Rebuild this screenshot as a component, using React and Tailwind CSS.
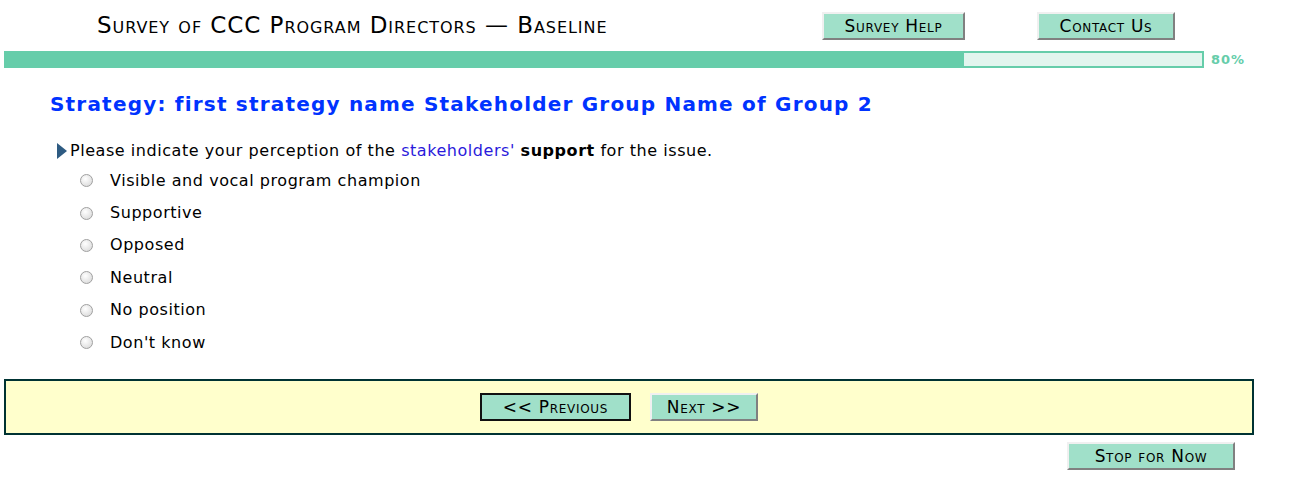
import React, { useState } from "react";

const options = [
  "Visible and vocal program champion",
  "Supportive",
  "Opposed",
  "Neutral",
  "No position",
  "Don't know",
];

// outset-style button like the old survey pages
function SurveyButton({ children, className = "", dark = false }) {
  return (
    <button
      className={`h-[28px] bg-[#a0e0c9] text-black [font-variant:small-caps] text-[17px] tracking-[0.7px] leading-none pt-[1px] ${
        dark
          ? "border-2 border-[#111]"
          : "border-2 border-t-[#f0f0f0] border-l-[#f0f0f0] border-b-[#808080] border-r-[#808080]"
      } ${className}`}
    >
      {children}
    </button>
  );
}

export default function App() {
  const [choice, setChoice] = useState(null);

  return (
    <div className="w-[1289px] h-[484px] bg-white font-['DejaVu_Sans',Verdana,sans-serif] text-black">
      {/* header */}
      <div className="flex items-center h-[51px] pt-[1px] pb-[1px]">
        <h1 className="ml-[97px] w-[725px] text-[23px] tracking-[0.95px] [font-variant:small-caps] leading-none">
          Survey of CCC Program Directors — Baseline
        </h1>
        <SurveyButton className="w-[143px]">Survey Help</SurveyButton>
        <SurveyButton className="w-[138px] ml-[72px]">Contact Us</SurveyButton>
      </div>

      {/* progress */}
      <div className="flex items-center ml-[4px] -mt-[1px]">
        <div className="flex w-[1200px] h-[17px]">
          <div className="w-[960px] bg-[#66cdaa]" />
          <div className="flex-1 bg-[#e2f5ee] border-2 border-l-0 border-[#66cdaa]" />
        </div>
        <span className="ml-[7px] text-[13px] font-bold tracking-[1px] text-[#66cdaa]">80%</span>
      </div>

      {/* heading */}
      <h2 className="ml-[50px] mt-[24px] text-[20px] font-bold tracking-[1.2px] text-[#0033ff] leading-none">
        Strategy: first strategy name Stakeholder Group Name of Group 2
      </h2>

      {/* question */}
      <div className="ml-[57px] mt-[25px] flex items-center text-[16px] tracking-[0.55px]">
        <svg width="10" height="16" viewBox="0 0 10 16" className="mr-[3px]">
          <path d="M0 0 L10 8 L0 16 Z" fill="#2e5b82" />
        </svg>
        <span>
          Please indicate your perception of the{" "}
          <span className="text-[#2a1adb]">stakeholders'</span>{" "}
          <b>support</b> for the issue.
        </span>
      </div>

      <div className="ml-[80px] mt-[2px] flex flex-col">
        {options.map((opt, i) => (
          <label key={opt} className="flex items-center h-[32.4px] text-[16px] tracking-[0.55px]">
            <input
              type="radio"
              name="support"
              checked={choice === i}
              onChange={() => setChoice(i)}
              className="appearance-none w-[13px] h-[13px] m-0 rounded-full border border-[#a0a0a0] bg-[radial-gradient(circle_at_40%_35%,#ffffff,#d4d4d4)] checked:bg-[radial-gradient(circle,#333_30%,#e8e8e8_38%)]"
            />
            <span className="ml-[17px]">{opt}</span>
          </label>
        ))}
      </div>

      {/* nav bar */}
      <div className="ml-[4px] mt-[20px] w-[1250px] h-[56px] bg-[#ffffcc] border-2 border-[#003333] flex items-center justify-center gap-[19px] pr-[20px]">
        <SurveyButton dark className="w-[151px]">
          &lt;&lt; Previous
        </SurveyButton>
        <SurveyButton className="w-[108px]">Next &gt;&gt;</SurveyButton>
      </div>

      <div className="flex justify-end pr-[54px] mt-[7px]">
        <SurveyButton className="w-[168px]">Stop for Now</SurveyButton>
      </div>
    </div>
  );
}
